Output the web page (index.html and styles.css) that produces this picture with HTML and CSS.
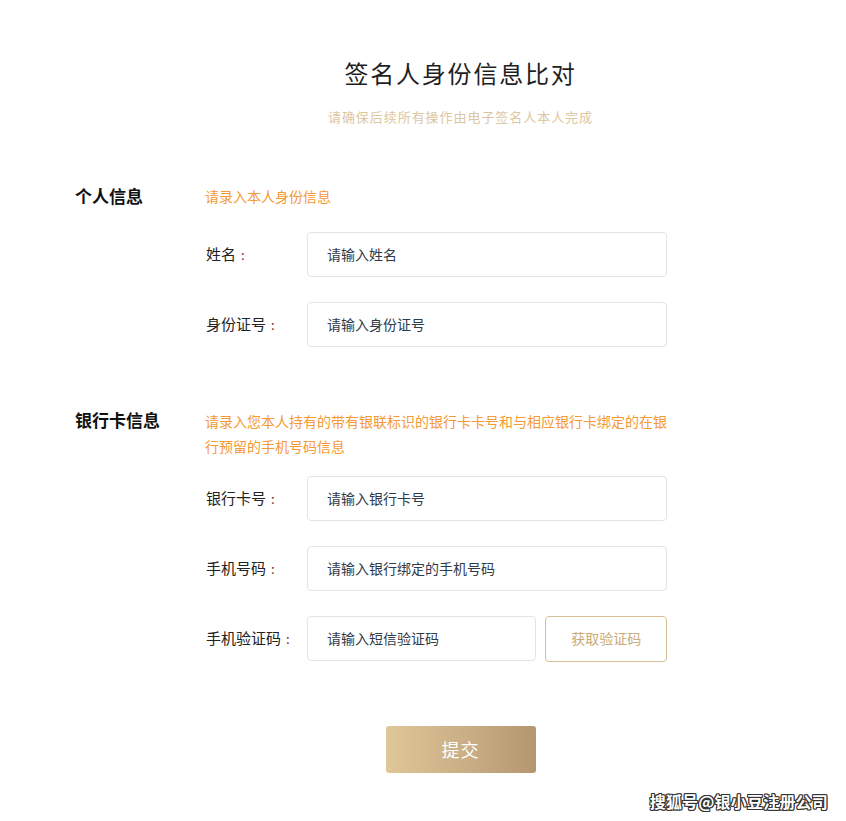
FILE: index.html
```html
<!DOCTYPE html>
<html lang="zh-CN">
<head>
<meta charset="utf-8">
<title>签名人身份信息比对</title>
<link rel="stylesheet" href="styles.css">
</head>
<body>
<div class="page">
  <h1 class="title">签名人身份信息比对</h1>
  <p class="subtitle">请确保后续所有操作由电子签名人本人完成</p>

  <section class="section section-personal">
    <div class="sec-title">个人信息</div>
    <div class="sec-body">
      <div class="hint">请录入本人身份信息</div>
      <div class="rows rows-personal">
        <div class="row">
          <label class="label">姓名<span class="colon">:</span></label>
          <div class="field">请输入姓名</div>
        </div>
        <div class="row">
          <label class="label">身份证号<span class="colon">:</span></label>
          <div class="field">请输入身份证号</div>
        </div>
      </div>
    </div>
  </section>

  <section class="section section-bank">
    <div class="sec-title">银行卡信息</div>
    <div class="sec-body">
      <div class="hint">请录入您本人持有的带有银联标识的银行卡卡号和与相应银行卡绑定的在银行预留的手机号码信息</div>
      <div class="rows rows-bank">
        <div class="row">
          <label class="label">银行卡号<span class="colon">:</span></label>
          <div class="field">请输入银行卡号</div>
        </div>
        <div class="row">
          <label class="label">手机号码<span class="colon">:</span></label>
          <div class="field">请输入银行绑定的手机号码</div>
        </div>
        <div class="row">
          <label class="label">手机验证码<span class="colon">:</span></label>
          <div class="field field-code">请输入短信验证码</div>
          <button class="code-btn" type="button">获取验证码</button>
        </div>
      </div>
    </div>
  </section>

  <div class="submit-wrap">
    <button class="submit" type="button">提交</button>
  </div>
</div>
<div class="watermark">搜狐号@银小豆注册公司</div>
</body>
</html>
```
FILE: styles.css
```css
* { box-sizing: border-box; }
html, body {
  margin: 0;
  padding: 0;
  background: #ffffff;
}
body {
  font-family: "Noto Sans CJK SC", "Noto Sans", sans-serif;
  color: #333;
  width: 846px;
  height: 821px;
  overflow: hidden;
  position: relative;
}
.page {
  padding: 57px 0 0 75px;
}
.title {
  margin: 0;
  text-align: center;
  font-size: 24px;
  line-height: 32px;
  font-weight: 400;
  letter-spacing: 1.8px;
  color: #1f1f1f;
}
.subtitle {
  margin: 18px 0 0;
  text-align: center;
  font-size: 13px;
  line-height: 20px;
  letter-spacing: 0.95px;
  color: #dcc7a0;
}
.section {
  display: flex;
  align-items: flex-start;
}
.section-personal { margin-top: 58px; }
.section-bank { margin-top: 63px; }
.sec-title {
  width: 130px;
  flex: none;
  font-size: 17px;
  line-height: 22px;
  font-weight: 700;
  color: #111;
}
.section-bank .sec-title { margin-top: -1px; }
.sec-body {
  width: 462px;
}
.hint {
  font-size: 14px;
  line-height: 25px;
  color: #f59a33;
  margin-top: -1px;
}
.rows {
  display: flex;
  flex-direction: column;
  gap: 25px;
}
.rows-personal { margin-top: 23px; }
.rows-bank { margin-top: 17px; }
.row {
  display: flex;
  align-items: center;
  height: 45px;
}
.label {
  width: 102px;
  flex: none;
  font-size: 15px;
  color: #222;
  padding-left: 1px;
  padding-bottom: 2px;
}
.colon {
  margin-left: 5px;
  color: #6b2a2a;
  font-size: 13px;
}
.field {
  width: 360px;
  height: 45px;
  border: 1px solid #e2e4e8;
  border-radius: 4px;
  padding-left: 19px;
  padding-bottom: 2px;
  display: flex;
  align-items: center;
  font-size: 14px;
  color: #303a48;
}
.field-code {
  width: 230px;
}
.code-btn {
  margin-left: 9px;
  width: 122px;
  height: 46px;
  border: 1px solid #d6bf93;
  border-radius: 4px;
  background: #fff;
  font-family: inherit;
  font-size: 14px;
  color: #c9ab77;
  padding: 0 0 2px;
}
.submit-wrap {
  display: flex;
  justify-content: center;
  margin-top: 65px;
}
.submit {
  width: 150px;
  height: 47px;
  border: none;
  border-radius: 3px;
  background: linear-gradient(90deg, #dfc797 0%, #c9ad84 55%, #b4966f 100%);
  color: #fff;
  font-family: inherit;
  font-size: 18px;
  letter-spacing: 1px;
  padding: 0 0 2px;
}
.watermark {
  position: absolute;
  right: 18px;
  bottom: 8px;
  font-size: 16px;
  font-weight: 700;
  color: #fff;
  letter-spacing: 0.2px;
  text-shadow: 1px 0 0 #333, -1px 0 0 #333, 0 1px 0 #333, 0 -1px 0 #333, 1px 1px 0 #333, -1px -1px 0 #333, 1px -1px 0 #333, -1px 1px 0 #333;
}
```
